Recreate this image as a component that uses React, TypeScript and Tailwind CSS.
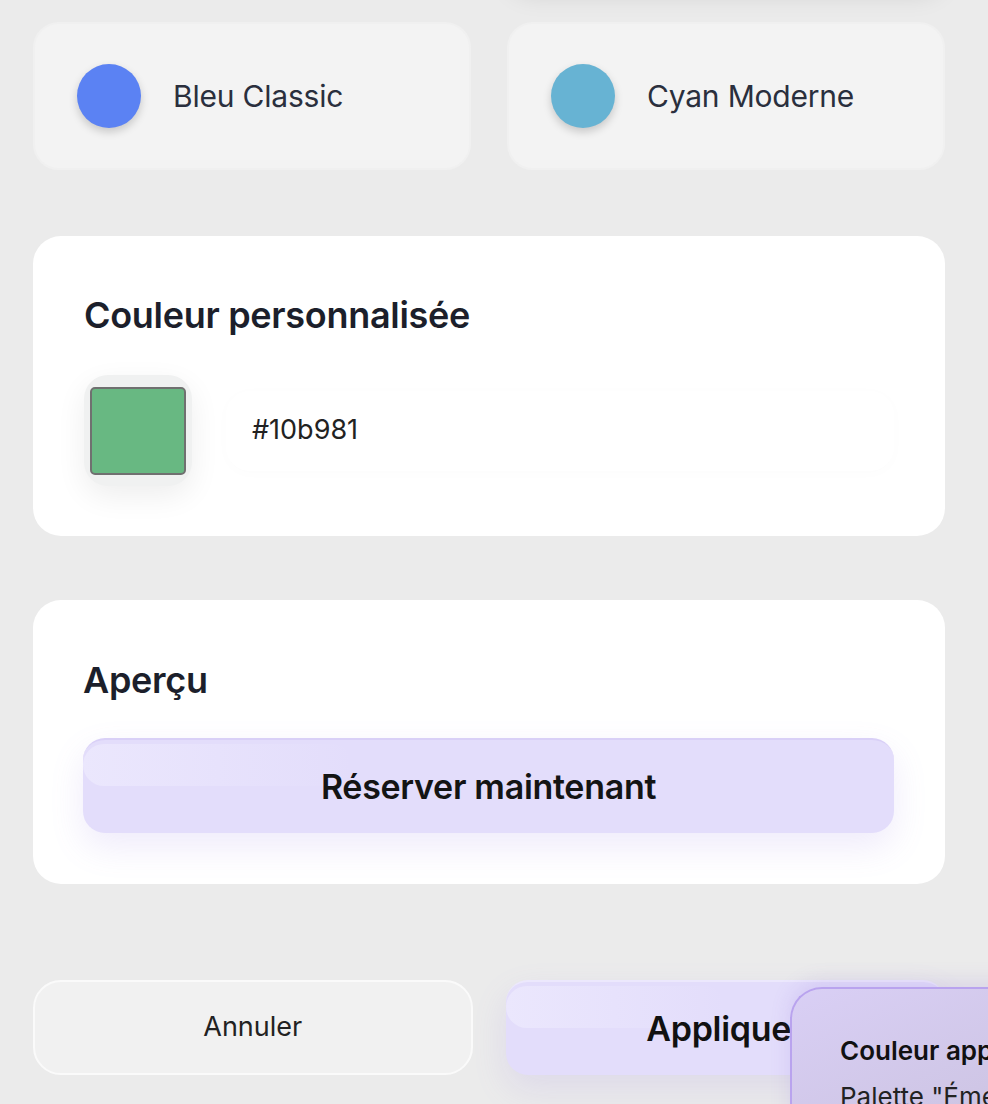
const palettes = [
  { name: 'Bleu Classic', color: 'bg-[#5b82f3]' },
  { name: 'Cyan Moderne', color: 'bg-[#67b3d3]' },
];

const font = { fontFamily: 'Inter, "Noto Sans", sans-serif' };

export default function App() {
  return (
    <div
      className="relative h-[1104px] w-full overflow-hidden bg-[#ebebeb] text-[#1c1f2b]"
      style={font}
    >
      <div className="flex flex-col pl-[33px] pr-[43px]">
        {/* previous row, scrolled out of view */}
        <div className="-mt-[162px] grid h-[148px] grid-cols-2 gap-[36px]">
          <div className="rounded-[26px] bg-[#f3f3f3]" />
          <div className="rounded-[26px] bg-[#f3f3f3] shadow-[0_10px_24px_rgba(0,0,0,0.10)]" />
        </div>

        <div className="mt-[36px] grid grid-cols-2 gap-[36px]">
          {palettes.map((p) => (
            <div
              key={p.name}
              className="flex h-[148px] items-center gap-[32px] rounded-[26px] border-2 border-[#f0f0f0] bg-[#f3f3f3] pl-[42px]"
            >
              <span
                className={`h-[64px] w-[64px] shrink-0 rounded-full ${p.color} shadow-[0_4px_8px_rgba(0,0,0,0.18)]`}
              />
              <span className="text-[30px] font-normal tracking-[-0.2px] text-[#2a2f3d]">{p.name}</span>
            </div>
          ))}
        </div>

        <div className="mt-[66px] rounded-[28px] bg-white pb-[50px] pl-[51px] pr-[51px] pt-[55px]">
          <h2 className="text-[36px] font-semibold leading-[48px] tracking-[-0.3px] text-[#1c1f2b]">
            Couleur personnalisée
          </h2>
          <div className="mt-[36px] flex items-center gap-[34px]">
            <div className="flex h-[111px] w-[108px] shrink-0 items-center justify-center rounded-[24px] bg-[#f0f1f1] shadow-[0_10px_30px_rgba(0,0,0,0.07)]">
              <div className="h-[88px] w-[96px] rounded-[5px] border-2 border-[#707070] bg-[#68b882]" />
            </div>
            <div className="flex h-[80px] flex-1 items-center rounded-[24px] bg-white pl-[26px] text-[27px] text-[#222] shadow-[0_2px_14px_rgba(0,0,0,0.015)]">
              #10b981
            </div>
          </div>
        </div>

        <div className="mt-[64px] rounded-[28px] bg-white pb-[51px] pl-[50px] pr-[51px] pt-[56px]">
          <h2 className="text-[36px] font-semibold leading-[48px] tracking-[-0.3px] text-[#1c1f2b]">
            Aperçu
          </h2>
          <button className="relative mt-[34px] flex h-[95px] w-full items-center justify-center overflow-hidden rounded-[22px] border-t-2 border-[#d9d0f7] bg-[#e3ddfb] text-[34px] font-semibold tracking-[-0.3px] text-[#141414] shadow-[0_14px_34px_rgba(140,110,230,0.14)]">
            <span className="absolute left-0 top-[4px] h-[42px] w-1/3 rounded-[22px] bg-gradient-to-r from-[#ebe7fd] to-transparent" />
            <span className="relative">Réserver maintenant</span>
          </button>
        </div>

        <div className="mt-[96px] grid grid-cols-2 gap-[33px]">
          <button className="flex h-[95px] items-center justify-center rounded-[28px] border-2 border-[#fafafa] bg-[#f1f1f1] text-[27px] text-[#222]">
            Annuler
          </button>
          <button className="relative flex h-[95px] items-center justify-center overflow-hidden rounded-[22px] border-t-2 border-[#ece8fd] bg-[#e3ddfb] text-[34px] font-semibold tracking-[-0.3px] text-[#111] shadow-[0_14px_34px_rgba(140,110,230,0.14)]">
            <span className="absolute left-0 top-[4px] h-[42px] w-1/2 rounded-[22px] bg-gradient-to-r from-[#ebe7fd] to-transparent" />
            <span className="relative">Appliquer</span>
          </button>
        </div>
      </div>

      {/* toast */}
      <div className="absolute left-[790px] top-[987px] h-[180px] w-[420px] rounded-tl-[32px] border-l-2 border-t-2 border-[#b9a3ee] bg-gradient-to-br from-[#d9cff5] via-[#cfc6e6] to-[#bdb9c4] pl-[48px] pt-[44px] shadow-[0_-6px_20px_rgba(120,90,200,0.15)]">
        <p className="whitespace-nowrap text-[26px] font-semibold leading-[36px] text-[#111]">Couleur appliquée</p>
        <p className="mt-[10px] whitespace-nowrap text-[26px] leading-[36px] text-[#222]">Palette "Émeraude" appliquée</p>
      </div>
    </div>
  );
}
